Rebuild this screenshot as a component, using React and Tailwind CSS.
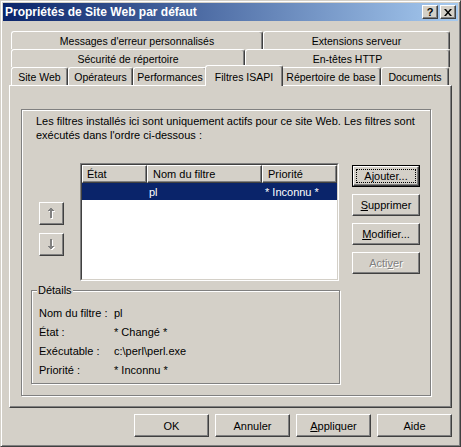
import React from "react";

const raised =
  "border border-t-white border-l-white border-r-[#404040] border-b-[#404040] shadow-[inset_-1px_-1px_0_#808080] bg-[#d4d0c8]";
const tabBase =
  "h-full flex items-center justify-center border-l border-t border-r border-l-white border-t-white border-r-[#404040] shadow-[inset_-1px_0_0_#808080] rounded-t-[3px] bg-[#d4d0c8] whitespace-nowrap text-[10.5px]";

function Tab({ className, children }) {
  return <div className={tabBase + " " + className}>{children}</div>;
}

function Btn({ className, children }) {
  return (
    <div className={raised + " flex items-center justify-center " + className}>
      {children}
    </div>
  );
}

function ArrowGlyph({ down }) {
  const rects = down
    ? [
        [3, 0, 2, 7],
        [1, 7, 6, 1],
        [2, 8, 4, 1],
        [3, 9, 2, 1],
      ]
    : [
        [3, 0, 2, 1],
        [2, 1, 4, 1],
        [1, 2, 6, 1],
        [3, 3, 2, 7],
      ];
  return (
    <svg width="9" height="11" viewBox="0 0 9 11">
      {rects.map((r, i) => (
        <rect key={"w" + i} x={r[0] + 1} y={r[1] + 1} width={r[2]} height={r[3]} fill="#ffffff" />
      ))}
      {rects.map((r, i) => (
        <rect key={"g" + i} x={r[0]} y={r[1]} width={r[2]} height={r[3]} fill="#808080" />
      ))}
    </svg>
  );
}

export default function App() {
  return (
    <div className="w-[461px] h-[447px] bg-[#d4d0c8] border border-t-[#d4d0c8] border-l-[#d4d0c8] border-r-[#404040] border-b-[#404040] shadow-[inset_1px_1px_0_#fff,inset_-1px_-1px_0_#808080] p-[2px] font-['Liberation_Sans',Arial,sans-serif] text-[11px] leading-[14px] text-black flex flex-col overflow-hidden">
      {/* Title bar */}
      <div className="h-[18px] shrink-0 bg-[linear-gradient(to_right,#0a246a,#a6caf0)] flex items-center pl-[2px] pr-[2px]">
        <div className="flex-1 text-white font-bold text-[12px] leading-[18px] whitespace-nowrap">
          Propriétés de Site Web par défaut
        </div>
        <div className="flex gap-[2px]">
          <div className={raised + " w-[16px] h-[14px] flex items-center justify-center"}>
            <span className="font-bold text-[11px] leading-[11px] mt-[1px]">?</span>
          </div>
          <div className={raised + " w-[16px] h-[14px] flex items-center justify-center"}>
            <svg width="8" height="7" viewBox="0 0 8 7">
              <path d="M0 0h2l2 2.4L6 0h2L5 3.5 8 7H6L4 4.6 2 7H0l3-3.5z" fill="#000" />
            </svg>
          </div>
        </div>
      </div>

      {/* Body */}
      <div className="flex flex-col pl-[6px] pt-[10px]">
        {/* Tabs */}
        <div className="pl-[2px] flex flex-col">
          <div className="flex h-[18px]">
            <Tab className="w-[252px]">Messages d'erreur personnalisés</Tab>
            <Tab className="w-[187px]">Extensions serveur</Tab>
          </div>
          <div className="flex h-[18px]">
            <Tab className="w-[234px]">Sécurité de répertoire</Tab>
            <Tab className="w-[205px]">En-têtes HTTP</Tab>
          </div>
          <div className="flex h-[18px] items-end">
            <Tab className="w-[57px]">Site Web</Tab>
            <Tab className="w-[65px]">Opérateurs</Tab>
            <Tab className="w-[74px]">Performances</Tab>
            <div className="relative z-10 w-[78px] h-[21px] -mx-[2px] -mb-[1px] pt-[1px] flex items-center justify-center border-l border-t border-r border-l-white border-t-white border-r-[#404040] shadow-[inset_-1px_0_0_#808080] rounded-t-[3px] bg-[#d4d0c8] whitespace-nowrap text-[10.5px]">
              Filtres ISAPI
            </div>
            <Tab className="w-[100px]">Répertoire de base</Tab>
            <Tab className="w-[68px]">Documents</Tab>
          </div>
        </div>

        {/* Panel */}
        <div className="w-[443px] h-[323px] border border-t-white border-l-white border-r-[#404040] border-b-[#404040] shadow-[inset_-1px_-1px_0_#808080] pl-[11px] pt-[23px]">
          <div className="w-[410px] h-[287px] border border-[#808080] shadow-[inset_1px_1px_0_#fff,1px_1px_0_#fff] flex flex-col">
            <div className="pl-[14px] pt-[4px]">
              <div className="whitespace-nowrap">
                Les filtres installés ici sont uniquement actifs pour ce site Web. Les filtres sont
              </div>
              <div className="whitespace-nowrap">exécutés dans l'ordre ci-dessous :</div>
            </div>

            <div className="flex mt-[21px] pl-[17px]">
              {/* arrows */}
              <div className="flex flex-col w-[25px] pt-[39px] gap-[8px]">
                <Btn className="w-[25px] h-[23px]">
                  <ArrowGlyph />
                </Btn>
                <Btn className="w-[25px] h-[23px]">
                  <ArrowGlyph down />
                </Btn>
              </div>

              {/* list */}
              <div className="ml-[16px] w-[259px] h-[118px] border border-t-[#808080] border-l-[#808080] border-r-white border-b-white">
                <div className="w-full h-full border border-t-[#404040] border-l-[#404040] border-r-[#d4d0c8] border-b-[#d4d0c8] bg-white flex flex-col">
                  <div className="flex h-[18px] shrink-0">
                    <div className={raised + " w-[65px] pl-[4px] flex items-center"}>État</div>
                    <div className={raised + " w-[115px] pl-[5px] flex items-center"}>Nom du filtre</div>
                    <div className={raised + " flex-1 pl-[5px] flex items-center"}>Priorité</div>
                  </div>
                  <div className="flex h-[17px] bg-[#0a246a] text-white items-center">
                    <div className="w-[65px]"></div>
                    <div className="w-[115px] pl-[2px]">pl</div>
                    <div className="flex-1 pl-[3px] whitespace-nowrap">* Inconnu *</div>
                  </div>
                </div>
              </div>

              {/* buttons */}
              <div className="ml-[13px] mt-[2px] flex flex-col gap-[7px]">
                <div className="w-[68px] h-[22px] border border-black flex">
                  <div className={raised + " flex-1 flex p-[2px]"}>
                    <div className="flex-1 border border-dotted border-black flex items-center justify-center">
                      A<span className="underline">j</span>outer...
                    </div>
                  </div>
                </div>
                <Btn className="w-[68px] h-[22px]">
                  <span className="underline">S</span>upprimer
                </Btn>
                <Btn className="w-[68px] h-[22px]">
                  <span className="underline">M</span>odifier...
                </Btn>
                <Btn className="w-[68px] h-[22px] text-[#808080] [text-shadow:1px_1px_0_#fff]">
                  Acti<span className="underline">v</span>er
                </Btn>
              </div>
            </div>

            {/* Details */}
            <div className="relative ml-[9px] mt-[9px] w-[309px] h-[94px] border border-[#808080] shadow-[inset_1px_1px_0_#fff,1px_1px_0_#fff] pt-[12px] pl-[7px]">
              <div className="absolute left-[5px] -top-[8px] px-[1px] bg-[#d4d0c8] leading-[14px]">Détails</div>
              <div className="flex h-[19px] items-center">
                <div className="w-[75px]">Nom du filtre :</div>
                <div>pl</div>
              </div>
              <div className="flex h-[19px] items-center">
                <div className="w-[75px]">État :</div>
                <div>* Changé *</div>
              </div>
              <div className="flex h-[19px] items-center">
                <div className="w-[75px]">Exécutable :</div>
                <div>c:\perl\perl.exe</div>
              </div>
              <div className="flex h-[19px] items-center">
                <div className="w-[75px]">Priorité :</div>
                <div>* Inconnu *</div>
              </div>
            </div>
          </div>
        </div>

        {/* Bottom buttons */}
        <div className="w-[443px] flex justify-end gap-[6px] mt-[6px]">
          <Btn className="w-[75px] h-[23px]">OK</Btn>
          <Btn className="w-[75px] h-[23px]">Annuler</Btn>
          <Btn className="w-[75px] h-[23px]">
            <span className="underline">A</span>ppliquer
          </Btn>
          <Btn className="w-[75px] h-[23px]">Aide</Btn>
        </div>
      </div>
    </div>
  );
}
